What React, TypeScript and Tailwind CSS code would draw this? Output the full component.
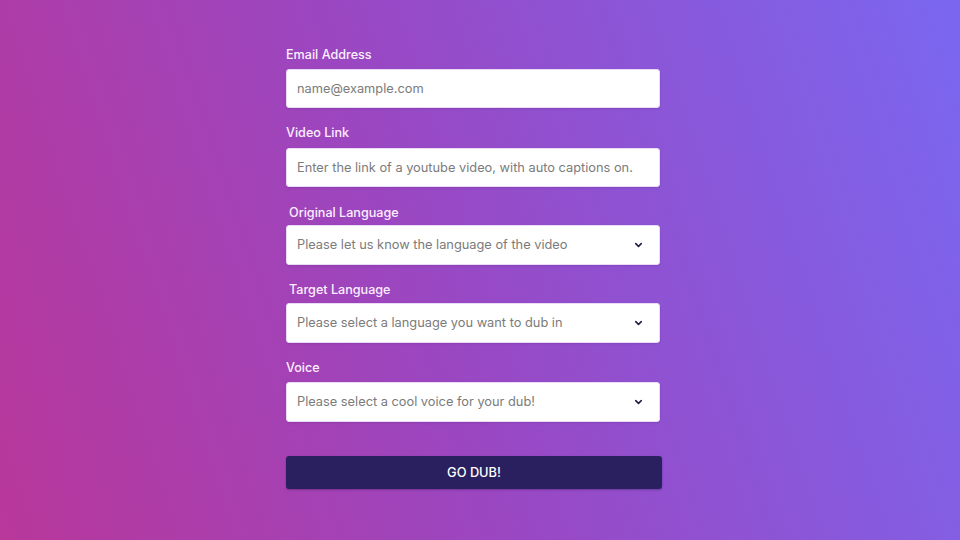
import { ChevronDown } from "lucide-react";

const selects = [
  { label: "Original Language", placeholder: "Please let us know the language of the video", labelClass: "mt-[16px] mb-[2px] pl-[3px]" },
  { label: "Target Language", placeholder: "Please select a language you want to dub in", labelClass: "mt-[15px] mb-[3px] pl-[3px]" },
  { label: "Voice", placeholder: "Please select a cool voice for your dub!", labelClass: "mt-[15px] mb-[4px]" },
];

const fieldClass =
  "w-[374px] h-[39px] bg-white rounded-[3px] border border-[#eadcf7] px-[10px] text-[12.8px] text-[#333] placeholder-[#7b7b7b] outline-none shadow-[0_1px_2px_rgba(60,20,90,0.15)]";

const labelClass = "text-[12.6px] leading-[20px] font-medium text-[#fbefff]";

export default function App() {
  return (
    <div className="min-h-screen w-full bg-[linear-gradient(72deg,#b8379a_0%,#9a47c2_45%,#7a67f0_100%)] font-['Inter',sans-serif] flex justify-center pr-[12px]">
      <form className="w-[376px] pt-[45px] flex flex-col" onSubmit={(e) => e.preventDefault()}>
        <label className={`${labelClass} mb-[4px]`}>Email Address</label>
        <input className={fieldClass} placeholder="name@example.com" />

        <label className={`${labelClass} mt-[15px] mb-[5px]`}>Video Link</label>
        <input className={fieldClass} placeholder="Enter the link of a youtube video, with auto captions on." />

        {selects.map((s) => (
          <div key={s.label} className="flex flex-col">
            <label className={`${labelClass} ${s.labelClass}`}>{s.label}</label>
            <div className="relative w-[374px]">
              <select
                defaultValue=""
                className="w-full h-[40px] appearance-none bg-white rounded-[3px] border border-[#eadcf7] pl-[10px] pr-8 text-[12.8px] text-[#7b7b7b] outline-none shadow-[0_1px_2px_rgba(60,20,90,0.15)]"
              >
                <option value="" disabled>
                  {s.placeholder}
                </option>
              </select>
              <ChevronDown
                size={11}
                strokeWidth={3.5}
                className="absolute right-[16px] top-1/2 -translate-y-1/2 text-[#23204a] pointer-events-none"
              />
            </div>
          </div>
        ))}

        <button
          type="submit"
          className="mt-[34px] h-[33px] w-[376px] rounded-[3px] bg-[#2a2060] text-white text-[12.8px] font-medium shadow-[0_1px_2px_rgba(20,10,50,0.3)]"
        >
          GO DUB!
        </button>
      </form>
    </div>
  );
}
